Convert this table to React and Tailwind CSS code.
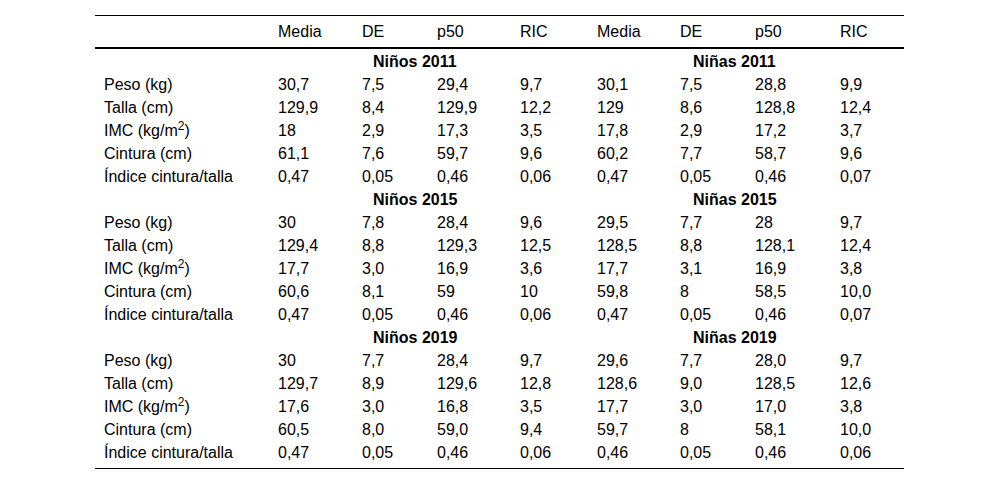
import React from 'react';

const cols = ['Media', 'DE', 'p50', 'RIC', 'Media', 'DE', 'p50', 'RIC'];

const groups = [
  {
    left: 'Niños 2011',
    right: 'Niñas 2011',
    rows: [
      ['Peso (kg)', '30,7', '7,5', '29,4', '9,7', '30,1', '7,5', '28,8', '9,9'],
      ['Talla (cm)', '129,9', '8,4', '129,9', '12,2', '129', '8,6', '128,8', '12,4'],
      ['IMC', '18', '2,9', '17,3', '3,5', '17,8', '2,9', '17,2', '3,7'],
      ['Cintura (cm)', '61,1', '7,6', '59,7', '9,6', '60,2', '7,7', '58,7', '9,6'],
      ['Índice cintura/talla', '0,47', '0,05', '0,46', '0,06', '0,47', '0,05', '0,46', '0,07'],
    ],
  },
  {
    left: 'Niños 2015',
    right: 'Niñas 2015',
    rows: [
      ['Peso (kg)', '30', '7,8', '28,4', '9,6', '29,5', '7,7', '28', '9,7'],
      ['Talla (cm)', '129,4', '8,8', '129,3', '12,5', '128,5', '8,8', '128,1', '12,4'],
      ['IMC', '17,7', '3,0', '16,9', '3,6', '17,7', '3,1', '16,9', '3,8'],
      ['Cintura (cm)', '60,6', '8,1', '59', '10', '59,8', '8', '58,5', '10,0'],
      ['Índice cintura/talla', '0,47', '0,05', '0,46', '0,06', '0,47', '0,05', '0,46', '0,07'],
    ],
  },
  {
    left: 'Niños 2019',
    right: 'Niñas 2019',
    rows: [
      ['Peso (kg)', '30', '7,7', '28,4', '9,7', '29,6', '7,7', '28,0', '9,7'],
      ['Talla (cm)', '129,7', '8,9', '129,6', '12,8', '128,6', '9,0', '128,5', '12,6'],
      ['IMC', '17,6', '3,0', '16,8', '3,5', '17,7', '3,0', '17,0', '3,8'],
      ['Cintura (cm)', '60,5', '8,0', '59,0', '9,4', '59,7', '8', '58,1', '10,0'],
      ['Índice cintura/talla', '0,47', '0,05', '0,46', '0,06', '0,46', '0,05', '0,46', '0,06'],
    ],
  },
];

const grid = 'grid grid-cols-[175px_84px_75px_83px_77px_83px_75px_85px_72px]';

const Label = ({ text }) =>
  text === 'IMC' ? (
    <>
      IMC (kg/m<sup>2</sup>)
    </>
  ) : (
    text
  );

export default function App() {
  return (
    <div
      className="w-[1000px] h-[484px] bg-white text-black text-[16px] pt-[15px]"
      style={{ fontFamily: '"Liberation Sans", Arial, sans-serif' }}
    >
      <div className="ml-[95px] w-[809px] border-t border-b border-black pb-[4px]">
        {/* header */}
        <div className={`${grid} h-[33px] leading-[31px] border-b-2 border-black`}>
          <div />
          {cols.map((c, i) => (
            <div key={i} className="pl-[8px]">
              {c}
            </div>
          ))}
        </div>

        <div className="pt-[1px]">
          {groups.map((g) => (
            <div key={g.left}>
              <div className={`${grid} h-[23px] leading-[23px] font-bold`}>
                <div />
                <div className="col-span-4 pl-[103px]">{g.left}</div>
                <div className="col-span-4 pl-[104px]">{g.right}</div>
              </div>
              {g.rows.map((r, ri) => (
                <div key={ri} className={`${grid} h-[23px] leading-[23px]`}>
                  {r.map((cell, ci) => (
                    <div key={ci} className={ci === 0 ? 'pl-[9px] whitespace-nowrap' : 'pl-[8px]'}>
                      {ci === 0 ? <Label text={cell} /> : cell}
                    </div>
                  ))}
                </div>
              ))}
            </div>
          ))}
        </div>
      </div>
    </div>
  );
}
